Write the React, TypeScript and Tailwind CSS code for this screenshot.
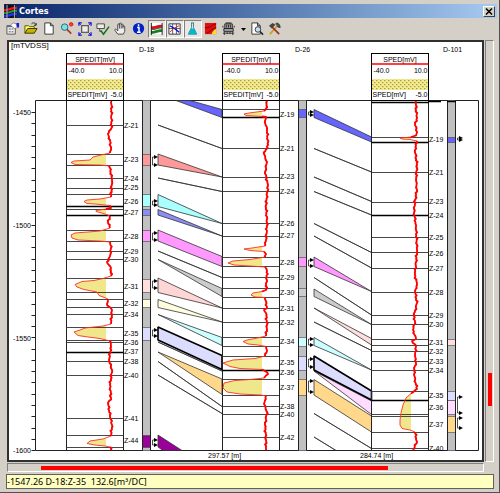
import React, { useState } from 'react';

type Point = [number, number];

interface Zone {
  top: number;
  bottom: number;
  color: string;
}

interface Well {
  name: string;
  nameX: number;
  curve: string;
  track: number;
  strip: number;
  cutoff: number;
  lines: number[];
  thick: number[];
  labels: [string, number][];
  zones: Zone[];
  arrows: number[][];
  log: Point[];
}

interface Link {
  points: string;
  fill?: string;
  bold?: boolean;
}

const TRACK_WIDTH = 57;
const TOP = 100.5;
const BOTTOM = 450.5;

const wells: Well[] = [
  {
    name: 'D-18',
    nameX: 139,
    curve: 'SPEDIT[mV]',
    track: 66.5,
    strip: 142.5,
    cutoff: 106,
    lines: [125, 154, 165, 178, 188, 194, 209, 230, 241, 251, 259, 278, 292, 299, 307, 314, 327, 340, 342, 361, 375, 418, 435, 447],
    thick: [206, 215, 352],
    labels: [
      ['Z-21', 125], ['Z-23', 159], ['Z-24', 178], ['Z-25', 187], ['Z-26', 201], ['Z-27', 212], ['Z-28', 236],
      ['Z-29', 251], ['Z-30', 259], ['Z-31', 286], ['Z-32', 303], ['Z-34', 314], ['Z-35', 333], ['Z-36', 342],
      ['Z-37', 351], ['Z-38', 361], ['Z-40', 375], ['Z-41', 418], ['Z-44', 440],
    ],
    zones: [
      { top: 154, bottom: 165, color: '#ff9999' },
      { top: 194, bottom: 206, color: '#aaffff' },
      { top: 209, bottom: 215, color: '#8c8cf5' },
      { top: 230, bottom: 241, color: '#ff99ff' },
      { top: 279, bottom: 292, color: '#ffdede' },
      { top: 299, bottom: 307, color: '#ffffe0' },
      { top: 327, bottom: 340, color: '#dcdcff' },
      { top: 435, bottom: 447, color: '#990099' },
    ],
    arrows: [[157, 165], [201, 205], [233, 240], [281, 288], [330, 336], [440, 445]],
    log: [
      [111.5, 101], [111.5, 128], [108, 134], [110, 140], [111, 150], [110, 153], [101, 155], [93, 157], [90, 160],
      [74, 161], [71, 162.5], [75, 164.5], [100, 165], [109, 166], [110, 168], [112, 180], [111, 197], [100, 199],
      [87, 200], [84, 201.5], [87, 203.5], [95, 204], [110, 205.5], [111, 208], [106, 209], [96, 210.5], [96, 211.5],
      [100, 212.5], [105, 214], [110, 216], [108, 222], [110, 228], [100, 231], [88, 232], [75, 233], [71, 235],
      [72, 238], [78, 240], [100, 241], [110, 242], [111, 248], [110, 256], [107, 262], [111, 268], [111, 276],
      [103, 278.5], [94, 280.5], [82, 281.5], [75, 284.5], [77, 287], [84, 289.5], [97, 292], [99, 295.5],
      [103, 297], [108, 299], [107, 304], [112, 310], [111, 324], [103, 326], [85, 328], [80, 330], [74, 332],
      [78, 335.5], [88, 337], [100, 338.5], [110, 341], [111, 347], [109, 360], [112, 370], [110, 385], [111, 398],
      [108, 403], [110, 415], [112, 425], [111, 436], [103, 439], [90, 441], [87, 443.5], [95, 445], [105, 446],
      [110, 447], [111, 450],
    ],
  },
  {
    name: 'D-26',
    nameX: 295,
    curve: 'SPEDIT[mV]',
    track: 222.5,
    strip: 298.5,
    cutoff: 262,
    lines: [109, 148, 177, 191, 223, 236, 257, 266, 277, 288, 297, 308, 322, 337, 346, 356, 379, 395, 406, 414, 437],
    thick: [117, 370],
    labels: [
      ['Z-19', 114], ['Z-21', 148], ['Z-23', 176], ['Z-24', 191], ['Z-26', 223], ['Z-27', 235], ['Z-28', 262],
      ['Z-29', 277], ['Z-30', 292], ['Z-31', 308], ['Z-32', 322], ['Z-34', 341], ['Z-35', 362], ['Z-36', 372],
      ['Z-37', 387], ['Z-38', 406], ['Z-40', 414], ['Z-42', 437],
    ],
    zones: [
      { top: 109, bottom: 117, color: '#6666ff' },
      { top: 257, bottom: 266, color: '#ff99ff' },
      { top: 288, bottom: 296, color: '#cccccc' },
      { top: 337, bottom: 346, color: '#ccffff' },
      { top: 356, bottom: 370, color: '#dcdcff' },
      { top: 379, bottom: 395, color: '#ffd88c' },
    ],
    arrows: [[112, 115], [260, 266], [339, 345], [359, 367], [381, 392]],
    log: [
      [267, 101], [266, 109], [264, 111], [249, 113], [244, 114], [246, 115.5], [262, 116.5], [266, 117], [265, 121],
      [267, 130], [268, 145], [264, 154], [267, 162], [265, 172], [268, 185], [266, 205], [267, 223], [266, 240],
      [265, 246], [252, 248], [244, 249], [250, 250.5], [264, 251.5], [266, 254], [265, 257], [250, 259.5],
      [233, 261], [228, 263], [234, 265], [250, 266], [265, 267], [267, 271], [266, 290], [262, 291.5], [253, 293],
      [251, 295], [255, 297], [265, 297.5], [267, 308], [264, 310], [266, 313], [267, 325], [266, 336], [255, 338.5],
      [247, 340], [243, 341.5], [248, 344], [258, 345], [266, 346.5], [267, 351], [265, 356], [255, 358.5],
      [233, 360], [223, 363], [230, 366.5], [240, 368.5], [262, 369.5], [265, 371], [268, 374], [264, 378],
      [250, 379.5], [235, 380.5], [224, 383], [223, 388], [227, 392], [240, 394], [261, 395], [266, 396],
      [264, 404], [267, 412], [265, 425], [266, 440], [266, 450],
    ],
  },
  {
    name: 'D-101',
    nameX: 443,
    curve: 'SPED[mV]',
    track: 371.5,
    strip: 447.5,
    cutoff: 411,
    lines: [137, 172, 202, 237, 252, 268, 292, 315, 324, 339, 345, 351, 361, 370, 391, 414, 416, 432, 448],
    thick: [102, 142, 215, 400],
    labels: [
      ['Z-19', 139], ['Z-21', 172], ['Z-23', 201], ['Z-24', 215], ['Z-25', 237], ['Z-26', 253], ['Z-27', 268],
      ['Z-28', 292], ['Z-29', 315], ['Z-30', 324], ['Z-31', 342], ['Z-32', 351], ['Z-33', 361], ['Z-34', 370],
      ['Z-35', 395], ['Z-36', 407], ['Z-37', 424], ['Z-40', 448],
    ],
    zones: [
      { top: 137, bottom: 142, color: '#6666ff' },
      { top: 339, bottom: 345, color: '#ffdede' },
      { top: 391, bottom: 400, color: '#dcdcff' },
      { top: 400, bottom: 414, color: '#ffdcff' },
      { top: 416, bottom: 432, color: '#ffd88c' },
    ],
    arrows: [[138, 140], [397, 413], [418, 428]],
    log: [
      [416, 101], [416, 110], [417, 118], [415, 124], [417, 132], [416, 135.5], [411, 137], [400, 138], [402, 139],
      [410, 139.5], [417, 141], [415, 150], [417, 165], [416, 180], [417, 190], [415, 200], [414, 213], [416, 225],
      [417, 250], [416, 262], [415, 275], [417, 285], [415, 291], [417, 303], [414, 316], [415, 322], [413, 330],
      [416, 339], [412, 341], [413, 343], [416, 346], [415, 356], [416, 363], [414, 368], [415, 380], [417, 389],
      [411, 393.5], [406, 398], [403, 405], [401, 413], [400, 420], [400, 425], [402, 428.5], [410, 430],
      [415, 432], [417, 442], [413, 450],
    ],
  },
];

const links: Link[] = [
  // D-18 to D-26
  { points: '176,100.5 190,100.5 222,109.5 222,117.5', fill: '#6666ff' },
  { points: '158,125 222,148.5' },
  { points: '158,154 222,177 158,165', fill: '#ff9999' },
  { points: '158,178 222,191.5' },
  { points: '158,194.5 222,223.5 158,206.5', fill: '#aaffff' },
  { points: '158,209.5 222,236 158,215', fill: '#8c8cf5' },
  { points: '158,230 222,256.5 222,266.5 158,241', fill: '#ff99ff' },
  { points: '158,251 222,277.5' },
  { points: '158,259.5 222,288.5 222,296.5', fill: '#cccccc' },
  { points: '158,278 222,308 158,292.5', fill: '#ffd6d6' },
  { points: '158,299.5 222,322 158,307.5', fill: '#ffffe0' },
  { points: '158,314.5 222,337.5 222,345.5', fill: '#ccffff' },
  { points: '158,342 222,371' },
  { points: '158,327 222,355.5 222,369.5 158,340', fill: '#dcdcff', bold: true },
  { points: '158,352 222,379 222,394.5', fill: '#ffd88c' },
  { points: '158,361.5 222,406.5' },
  { points: '158,375 222,413.5' },
  { points: '158,435 182,450.5 163,450.5 158,447', fill: '#990099' },
  // D-26 to D-101
  { points: '314,109.5 371.5,137 371.5,142 314,117.5', fill: '#6666ff' },
  { points: '314,148.5 371.5,172' },
  { points: '314,177 371.5,201.5' },
  { points: '314,191.5 371.5,215' },
  { points: '314,223.5 371.5,252.5' },
  { points: '314,236 371.5,268' },
  { points: '314,257 371.5,291.5 314,266.5', fill: '#ff99ff' },
  { points: '314,277.5 371.5,315' },
  { points: '314,289 371.5,324.5 314,296.5', fill: '#cccccc' },
  { points: '314,308 371.5,338.5 371.5,345', fill: '#ffdede' },
  { points: '314,322 371.5,350.5' },
  { points: '314,337.5 371.5,370 314,345.5', fill: '#ccffff' },
  { points: '314,371 371.5,401 371.5,414.5', fill: '#ffdcff' },
  { points: '314,356 371.5,391 371.5,400 314,370', fill: '#dcdcff', bold: true },
  { points: '314,379.5 371.5,416 371.5,432 314,395', fill: '#ffd88c' },
  { points: '314,413.5 371.5,448.5' },
  { points: '314,437 336,450.5' },
];

const ticks = Array.from({ length: 31 }, (_, i) => 112 + i * 11.27);
const depths: [string, number][] = [['-1450', 112], ['-1500', 225], ['-1550', 338], ['-1600', 450]];

const toPoints = (pts: Point[]) => pts.map((p) => p.join(',')).join(' ');

function baseline(log: Point[], cutoff: number): Point[][] {
  const runs: Point[][] = [];
  let run: Point[] = [];
  log.forEach(([x, y], i) => {
    if (x < cutoff) {
      if (run.length) runs.push(run);
      run = [];
      return;
    }
    const prev = log[i - 1];
    if (run.length && prev) {
      for (let yy = prev[1] + 1.5; yy < y - 1; yy += 1.5) {
        const t = (yy - prev[1]) / (y - prev[1]);
        run.push([prev[0] + (x - prev[0]) * t + Math.sin(yy * 2.3) * 0.5 + Math.sin(yy * 0.9) * 0.6, yy]);
      }
    }
    run.push([x, y]);
  });
  if (run.length) runs.push(run);
  return runs;
}

function WellTrack({ well }: { well: Well }) {
  const { track, strip, cutoff, log } = well;
  const right = track + TRACK_WIDTH;
  const clipId = `fill-${well.name}`;
  return (
    <g>
      <clipPath id={clipId}>
        <rect x={track} y={TOP} width={cutoff - track} height={BOTTOM - TOP} />
      </clipPath>

      {/* Header */}
      <text x={well.nameX} y="52">{well.name}</text>
      <rect x={track} y="53.5" width={TRACK_WIDTH} height="47" fill="white" stroke="black" />
      <text x={track + TRACK_WIDTH / 2} y="62" textAnchor="middle">{well.curve}</text>
      <path d={`M${track} 64H${right}`} stroke="#f00" strokeWidth="1.5" />
      <text x={track + 2} y="73">-40.0</text>
      <text x={right - 1} y="73" textAnchor="end">10.0</text>
      <rect x={track + 0.5} y="79" width={TRACK_WIDTH - 1} height="11" fill="url(#dots)" />
      <text x={track + 1} y="97">{well.curve}</text>
      <text x={right - 1} y="97" textAnchor="end">-5.0</text>

      {/* Zone strip */}
      <rect x={strip} y={TOP} width="8" height={BOTTOM - TOP} fill="#c0c0c0" />
      {well.zones.map((z) => (
        <rect key={z.top} x={strip} y={z.top + 0.5} width="8" height={z.bottom - z.top} fill={z.color} stroke="#444" strokeWidth="0.6" />
      ))}
      <path d={`M${strip} ${TOP}V${BOTTOM}M${strip + 8} ${TOP}V${BOTTOM}`} stroke="#222" />
      {well.arrows.map((ys) => (
        <g key={ys[0]}>
          <path d={`M${strip + 13} ${ys[0]}H${strip + 10}V${ys[1]}H${strip + 13}`} fill="none" stroke="#222" strokeWidth="0.8" />
          {ys.map((y) => (
            <path key={y} d={`M${strip + 11.5} ${y - 2}l4 2l-4 2z`} />
          ))}
        </g>
      ))}

      {/* Log */}
      <path d={`M${track} ${TOP}V${BOTTOM}M${right} ${TOP}V${BOTTOM}`} stroke="#222" />
      <polygon points={`${cutoff + 5},101 ${toPoints(log)} ${cutoff + 5},450`} fill="#f0e68c" clipPath={`url(#${clipId})`} />
      <path d={well.lines.map((y) => `M${track} ${y + 0.5}H${right}`).join('')} stroke="#333" strokeWidth="0.9" />
      <path d={well.thick.map((y) => `M${track} ${y + 0.5}H${right}`).join('')} stroke="black" strokeWidth="1.6" />
      <polyline points={toPoints(log)} fill="none" stroke="#ff3020" strokeWidth="0.9" />
      {baseline(log, cutoff).map((run, i) => (
        <polyline key={i} points={toPoints(run)} fill="none" stroke="#f00" strokeWidth="1.8" strokeLinejoin="round" />
      ))}
      {well.labels.map(([name, y]) => (
        <text key={name} x={right + 0.5} y={y + 3}>{name}</text>
      ))}
    </g>
  );
}

function CrossSection() {
  return (
    <svg viewBox="9 42 473 418" className="block w-full font-['Liberation_Sans',Arial,sans-serif] text-[7px]" role="img" aria-label="Cortes">
      <defs>
        <pattern id="dots" width="4" height="4" patternUnits="userSpaceOnUse">
          <rect width="4" height="4" fill="#f4ec8e" />
          <rect x="0" y="0" width="1.4" height="1.2" fill="#a89c48" />
          <rect x="2" y="2" width="1.4" height="1.2" fill="#a89c48" />
        </pattern>
      </defs>
      <text x="11" y="48" fontSize="8">[mTVDSS]</text>
      <path d="M35.5 100.5H478.5V450.5H35.5Z" fill="none" stroke="#222" />
      <path d={ticks.map((y) => `M31.5 ${Math.round(y) + 0.5}H35.5`).join('')} stroke="#222" />
      {depths.map(([label, y]) => (
        <text key={label} x="31" y={y + 3} textAnchor="end">{label}</text>
      ))}
      {links.map((link) => (
        <polygon
          key={link.points}
          points={link.points}
          fill={link.fill ?? 'none'}
          stroke={link.bold ? 'black' : '#333'}
          strokeWidth={link.bold ? 1.6 : 0.8}
          strokeLinejoin="bevel"
        />
      ))}
      {wells.map((well) => (
        <WellTrack key={well.name} well={well} />
      ))}
      <path d="M428 101.5H441M447 101.5H456" stroke="black" strokeWidth="1.6" />
      <text x="208" y="458">297.57 [m]</text>
      <text x="360" y="458">284.74 [m]</text>
    </svg>
  );
}

const tools: { label: string; toggle?: boolean; icon: React.ReactNode }[] = [
  {
    label: 'Properties',
    icon: (
      <>
        <path d="M2 5h9v9H2z" fill="#eee" stroke="#555" />
        <path d="M2 5.5h9" stroke="#668" strokeWidth="2" />
        <path d="M4 8.5h2M4 11.5h2M7 8.5h2M7 11.5h2" stroke="#555" />
        <path d="M6 4l3-2 3 1 1 4-3 1-2-2" fill="white" stroke="#777" strokeWidth=".8" />
        <path d="M12 2h3v5h-2z" fill="#1a1ae0" />
      </>
    ),
  },
  {
    label: 'Open',
    icon: (
      <>
        <path d="M2 13V5h4l1 1h5v3" fill="#ffff66" stroke="#555500" />
        <path d="M2 13l3-5h10l-3 5z" fill="#c8b400" stroke="#333300" />
        <path d="M9 3c2-2 4-1 5 1M14 2v2.500h-2.500" fill="none" stroke="#222" />
      </>
    ),
  },
  { label: 'New', icon: <path d="M4 2h6l3 3v9H4zM10 2v3h3" fill="white" stroke="#333" /> },
  {
    label: 'Zoom',
    icon: (
      <>
        <circle cx="6" cy="6.500" r="3.500" fill="#7ee0d8" stroke="#268" />
        <path d="M8.500 9l4.500 4.500" stroke="#a33" strokeWidth="1.800" />
        <circle cx="13" cy="3.500" r="1.800" fill="#f44" stroke="#d00" />
      </>
    ),
  },
  {
    label: 'Fit',
    icon: (
      <>
        <path d="M5 5h7v7H5z" fill="#eee" stroke="#333" />
        <path d="M2 5V2h3M12 2h3v3M2 12v3h3M15 12v3h-3" fill="none" stroke="#00f" strokeWidth="1.300" />
        <path d="M2 2l3 3M15 2l-3 3M2 15l3-3M15 15l-3-3" stroke="#223" strokeWidth=".8" />
      </>
    ),
  },
  {
    label: 'Apply',
    icon: (
      <>
        <path d="M2 3h8v5H2zM5 8v3h2" fill="#eee" stroke="#444" />
        <path d="M6 10l3 4 6-8" fill="none" stroke="#107010" strokeWidth="1.600" />
      </>
    ),
  },
  {
    label: 'Pan',
    icon: (
      <path
        d="M5 14L2 10c-.5-1.500 1-2 2-.5l1 1V4c0-1.300 1.800-1.300 1.800 0V3c0-1.300 1.900-1.300 1.900 0v1c0-1.300 1.900-1.200 1.900 0v2c0-1.200 1.900-1.200 1.900 0v5l-1.500 3zM6.800 4v4M8.700 4v4M10.600 5v3"
        fill="#eee"
        stroke="#333"
        strokeWidth=".9"
      />
    ),
  },
  {
    label: 'Information',
    icon: (
      <>
        <circle cx="8" cy="8" r="6" fill="#0020c8" />
        <path d="M8 3.500v2M6.500 7H8.500v5M6.300 12h4" stroke="white" strokeWidth="1.600" />
      </>
    ),
  },
  {
    label: 'Correlation',
    toggle: true,
    icon: (
      <>
        <path d="M2 2h12v12H2z" fill="white" />
        <path d="M2 5c4 2 7-2 12-1v3c-4-1-8 3-12 1z" fill="#e01010" />
        <path d="M2 10c4 2 7-2 12-1v3c-4-1-8 3-12 1z" fill="#108020" />
        <path d="M2.500 2v13M14 2v13M2 8.500c4 2 7-2 12-1" fill="none" stroke="#222" />
      </>
    ),
  },
  {
    label: 'Logs',
    toggle: true,
    icon: (
      <>
        <path d="M2 3h12v11H2z" fill="white" stroke="#333" />
        <path d="M6 3v11M10 3v11M2 8h12" stroke="#333" strokeWidth=".8" />
        <path d="M3 5l5 3 5 4" fill="none" stroke="#00d" strokeWidth="1.300" />
        <path d="M3 12l4-4 6-3" fill="none" stroke="#c22" />
      </>
    ),
  },
  {
    label: 'Fluids',
    toggle: true,
    icon: (
      <>
        <path d="M6.500 2h3M7 2v5l-3.500 7h9L9 7V2" fill="#dff" stroke="#367" strokeWidth=".9" />
        <path d="M6.300 8h3.400l2.800 6h-9z" fill="#00b8c8" />
      </>
    ),
  },
  {
    label: 'Surface',
    icon: (
      <>
        <path d="M2 2h12v12H2z" fill="#e01010" />
        <path d="M9 14c1-3 3-5 5-5.500V14z" fill="#ffe020" />
        <path d="M2 7c5 1 7-3 12-4M4 13c3-1 5-5 10-6" fill="none" stroke="#700" />
      </>
    ),
  },
  {
    label: 'Wells',
    icon: (
      <>
        <path d="M4 3h8v5H4zM3 8h10v3H3z" fill="#aaa" stroke="#222" />
        <path d="M5 2h6M6 4v3M8 4v3M10 4v3M2 5v2M14 5v2" stroke="#222" />
        <path d="M3.500 11v4M6.500 11v3M9.500 11v3M12.500 11v4M2 13h12" stroke="#333" />
      </>
    ),
  },
];

const extraTools = [
  {
    label: 'Preview',
    icon: (
      <>
        <path d="M3 2h6l3 3v9H3zM9 2v3h3" fill="white" stroke="#333" />
        <circle cx="9.500" cy="9" r="3" fill="#cde" stroke="#333" />
        <path d="M12 11.500l3 3" stroke="#222" strokeWidth="1.600" />
      </>
    ),
  },
  {
    label: 'Options',
    icon: (
      <>
        <path d="M3 14l8-9" stroke="#c8a020" strokeWidth="1.800" />
        <path d="M5 6l8 8" stroke="#a03020" strokeWidth="1.800" />
        <path d="M2 5l4-3 3 2-4 4z" fill="#444" />
        <path d="M9 3c2-2 5 0 5 4l-3-1" fill="#555" stroke="#222" strokeWidth=".8" />
      </>
    ),
  },
];

function ToolIcon({ children }: { children: React.ReactNode }) {
  return (
    <svg viewBox="1 1 15 15" className="w-3.5 h-3.5" fill="none" aria-hidden="true">
      {children}
    </svg>
  );
}

export default function App() {
  const [active, setActive] = useState(['Correlation', 'Logs', 'Fluids']);

  const toggle = (label: string) =>
    setActive((list) => (list.includes(label) ? list.filter((l) => l !== label) : [...list, label]));

  return (
    <div className="bg-[#d4d0c8] border-r border-b border-[#505050] pt-1 pb-[3px] pl-1 pr-0.5 font-['Liberation_Sans',Arial,sans-serif] text-black">
      {/* Title bar */}
      <header className="flex items-center h-3.5 bg-linear-to-r from-[#0a246a] to-[#a6caf0] pr-0.5">
        <svg viewBox="0 0 13 13" className="w-[13px] h-[13px] mr-0.5" fill="none" aria-hidden="true">
          <path d="M1 0h11v13H1z" fill="#101018" />
          <path d="M0 5c4 1 8-3 13-2" stroke="#f01020" strokeWidth="2.500" />
          <path d="M0 8c4 1 8-3 13-2" stroke="#10a030" strokeWidth="2" />
          <path d="M0 11c4 1 8-3 13-2" stroke="#2030ff" strokeWidth="2.500" />
          <path d="M3 0v13M10.500 0v13" stroke="#999" strokeWidth="1.200" />
        </svg>
        <h1 className="flex-1 font-['DejaVu_Sans_Condensed','DejaVu_Sans',sans-serif] text-[9px] leading-3 font-bold text-white">Cortes</h1>
        <button
          aria-label="Close"
          className="flex items-center justify-center w-3 h-[11px] bg-[#d4d0c8] border border-t-white border-l-white border-r-[#404040] border-b-[#404040]"
        >
          <svg viewBox="0 0 8 7" className="w-2 h-[7px]" aria-hidden="true">
            <path d="M1 .5l6 6M7 .5l-6 6" stroke="black" strokeWidth="1.500" />
          </svg>
        </button>
      </header>

      {/* Toolbar */}
      <div role="toolbar" className="flex items-center h-[22px]">
        {tools.map((tool) => (
          <button
            key={tool.label}
            aria-label={tool.label}
            aria-pressed={tool.toggle ? active.includes(tool.label) : undefined}
            onClick={() => tool.toggle && toggle(tool.label)}
            className={`flex items-center justify-center w-[18px] h-[18px] border ${
              active.includes(tool.label)
                ? 'bg-[#e9e7e3] border-t-[#808080] border-l-[#808080] border-r-white border-b-white'
                : 'border-transparent'
            }`}
          >
            <ToolIcon>{tool.icon}</ToolIcon>
          </button>
        ))}
        <button aria-label="More wells" className="flex items-center justify-center w-2.5 h-[18px]">
          <svg viewBox="0 0 5 3" className="w-[5px] h-[3px]" aria-hidden="true">
            <path d="M0 0h5L2.500 3z" />
          </svg>
        </button>
        {extraTools.map((tool) => (
          <button key={tool.label} aria-label={tool.label} className="flex items-center justify-center w-[18px] h-[18px]">
            <ToolIcon>{tool.icon}</ToolIcon>
          </button>
        ))}
      </div>

      <main className="grid grid-cols-[1fr_9px] gap-px pl-[3px] pr-[3px]">
        <div className="bg-white border-2 border-[#303030]">
          <CrossSection />
        </div>
        <div
          role="scrollbar"
          aria-orientation="vertical"
          aria-valuenow={85}
          aria-label="Vertical scroll"
          className="flex flex-col items-center border border-t-[#808080] border-l-[#808080] border-r-white border-b-white"
        >
          <div className="h-[79%]" />
          <div className="w-1 h-[8%] bg-[#f00]" />
        </div>
        <div
          role="scrollbar"
          aria-orientation="horizontal"
          aria-valuenow={24}
          aria-label="Horizontal scroll"
          className="flex items-center h-[9px] border border-t-[#808080] border-l-[#808080] border-r-white border-b-white"
        >
          <div className="w-[7%]" />
          <div className="w-[73%] h-1 bg-[#f00]" />
        </div>
      </main>

      {/* Status bar */}
      <footer className="mt-0.5 ml-0.5 mr-[3px] h-[15px] bg-[#ffffc0] border border-[#606060] font-['Noto_Sans','Open_Sans',sans-serif] text-[9px] leading-[13px] whitespace-pre">
        -1547.26 D-18:Z-35  132.6[m³/DC]
      </footer>
    </div>
  );
}
